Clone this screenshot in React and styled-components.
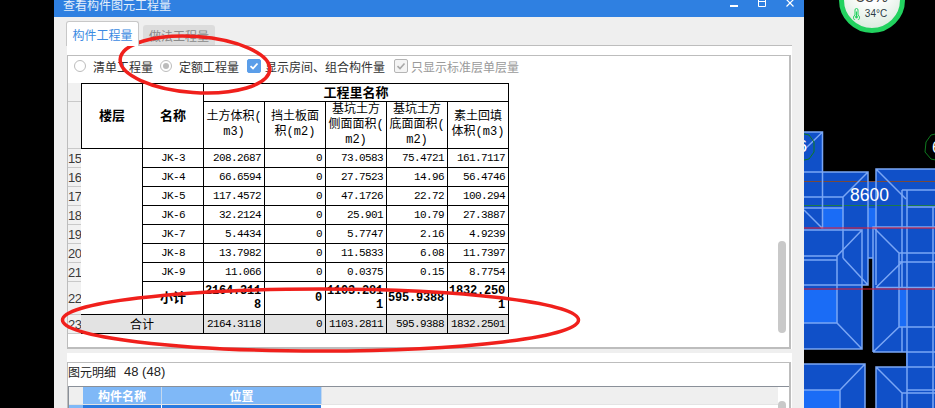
import React from 'react';
import styled, { createGlobalStyle } from 'styled-components';

const SANS = `'Noto Sans CJK SC', 'Liberation Sans', sans-serif`;
const MONO = `'Liberation Mono', 'Noto Sans CJK SC', monospace`;

const GlobalStyle = createGlobalStyle`
	html, body {
		margin: 0;
		padding: 0;
		background: #000;
		font-family: ${SANS};
	}
`;

const Screen = styled.div`
	position: relative;
	width: 935px;
	height: 408px;
	padding-left: 54px;
	box-sizing: border-box;
	display: flex;
	overflow: hidden;
	background: #000;
`;

const Dialog = styled.div`
	width: 750px;
	height: 408px;
	flex: none;
	display: flex;
	flex-direction: column;
	background: #efefef;
`;

const TitleBar = styled.div`
	height: 17px;
	flex: none;
	display: flex;
	justify-content: space-between;
	padding: 0 10px 0 9px;
	background: #2f80e1;
	color: #fff;
	overflow: hidden;
`;

const Title = styled.div`
	font-size: 12px;
	line-height: 9px;
	height: 9px;
	color: #e4effb;
`;

const WindowButtons = styled.div`
	display: flex;
	gap: 20px;
	align-items: flex-start;
`;

const DialogBody = styled.div`
	flex: 1;
	display: flex;
	flex-direction: column;
	padding: 4px 12px 0 13px;
	min-height: 0;
`;

const TabStrip = styled.div`
	height: 24px;
	flex: none;
	display: flex;
	align-items: flex-end;
	gap: 4px;
	margin-left: -1px;
`;

const Tab = styled.div`
	box-sizing: border-box;
	height: ${(p) => (p.$active ? '25px' : '20px')};
	width: ${(p) => (p.$active ? '73px' : '72px')};
	margin-bottom: ${(p) => (p.$active ? '-1px' : '0')};
	position: relative;
	z-index: ${(p) => (p.$active ? 1 : 0)};
	display: flex;
	align-items: center;
	justify-content: center;
	font-size: 12px;
	border-radius: 3px 3px 0 0;
	background: ${(p) => (p.$active ? '#fff' : '#dcdcdc')};
	color: ${(p) => (p.$active ? '#3b8ae2' : '#8a8a8a')};
	border: ${(p) => (p.$active ? '1px solid #c8c8c8' : 'none')};
	border-bottom: none;
`;

const Panel = styled.div`
	flex: 1;
	display: flex;
	flex-direction: column;
	min-height: 0;
	background: #fff;
	border-top: 1px solid #bdbdbd;
	padding-top: 9px;
`;

const QuantityBox = styled.div`
	box-sizing: border-box;
	height: 294px;
	flex: none;
	display: flex;
	flex-direction: column;
	border: 1px solid #bdbdbd;
	border-right-width: 2px;
	border-bottom-width: 2px;
	margin-right: 1px;
`;

const ToolRow = styled.div`
	height: 27px;
	flex: none;
	display: flex;
	align-items: center;
	gap: 7px;
	padding: 0 0 7px 6px;
	box-sizing: border-box;
	font-size: 12px;
	color: #333;
`;

const Option = styled.label`
	display: flex;
	align-items: center;
	gap: ${(p) => (p.$box ? (p.$muted ? '3px' : '4px') : '7px')};
	margin-left: ${(p) => (p.$box ? (p.$muted ? '2px' : '1px') : '0')};
	color: ${(p) => (p.$muted ? '#9a9a9a' : '#333')};
`;

const Radio = styled.span`
	box-sizing: border-box;
	width: 12px;
	height: 12px;
	border-radius: 50%;
	border: 1px solid #bcbcbc;
	background: #fff;
	display: flex;
	align-items: center;
	justify-content: center;

	&::after {
		content: '';
		width: 6px;
		height: 6px;
		border-radius: 50%;
		background: ${(p) => (p.$on ? '#bcbcbc' : 'transparent')};
	}
`;

const CheckBox = styled.span`
	box-sizing: border-box;
	width: 14px;
	height: 14px;
	border-radius: 2px;
	display: flex;
	align-items: center;
	justify-content: center;
	background: ${(p) => (p.$muted ? '#f4f4f4' : '#5b9ee9')};
	border: 1px solid ${(p) => (p.$muted ? '#b5b5b5' : '#5b9ee9')};
`;

const GridRow = styled.div`
	flex: 1;
	display: flex;
	min-height: 0;
`;

const Gutter = styled.div`
	width: 13px;
	flex: none;
	display: flex;
	flex-direction: column;
`;

const GutterCell = styled.div`
	box-sizing: border-box;
	height: ${(p) => p.$h}px;
	background: #f1f1f1;
	border-bottom: 1px solid #c9c9c9;
	overflow: hidden;
	white-space: nowrap;
	display: flex;
	align-items: center;
	font-family: 'Liberation Sans', sans-serif;
	font-size: 13px;
	letter-spacing: -0.5px;
	color: #3a3a3a;
`;

const QuantityTable = styled.table`
	table-layout: fixed;
	width: 428px;
	height: 251px;
	border-collapse: separate;
	border-spacing: 0;
	flex: none;
	align-self: flex-start;
	background: #fff;
	color: #000;
`;

const Row = styled.tr`
	height: ${(p) => p.$h}px;
`;

const Cell = styled.td`
	box-sizing: border-box;
	padding: 0 3px 0 0;
	border-right: 1px solid #000;
	border-bottom: 1px solid #000;
	font-family: ${MONO};
	font-size: 11px;
	line-height: 14px;
	letter-spacing: -0.6px;
	text-align: right;
	white-space: nowrap;
	overflow: hidden;
	background: ${(p) => (p.$total ? '#e3e3e3' : '#fff')};
`;

const NameCell = styled(Cell)`
	text-align: center;
	padding: 0;
`;

const FloorCell = styled(Cell)`
	padding: 0;
`;

const BoldCell = styled(Cell)`
	font-size: 12px;
	font-weight: 700;
	letter-spacing: -0.2px;
	line-height: 14px;
	white-space: normal;
	word-break: break-all;
`;

const BoldLabel = styled(Cell)`
	font-family: ${SANS};
	font-size: 13px;
	font-weight: 700;
	letter-spacing: 0;
	text-align: center;
	padding: 0 0 2px;
`;

const TotalLabel = styled(Cell)`
	font-family: ${SANS};
	font-size: 12px;
	letter-spacing: 0;
	text-align: center;
	padding: 0;
`;

const HeadCell = styled.th`
	box-sizing: border-box;
	padding: 0 0 3px;
	border-right: 1px solid #000;
	border-bottom: 1px solid #000;
	border-top: ${(p) => (p.$top ? '1px solid #000' : 'none')};
	border-left: ${(p) => (p.$left ? '1px solid #000' : 'none')};
	font-family: ${SANS};
	font-size: 13px;
	line-height: 13px;
	font-weight: 700;
`;

const ColumnHead = styled(HeadCell)`
	padding: 0;
	font-family: ${MONO};
	font-size: 12px;
	font-weight: 400;
	line-height: 15px;
	white-space: pre-line;
	overflow: hidden;
`;

const ScrollTrack = styled.div`
	flex: none;
	margin-left: auto;
	width: 8px;
	margin-right: 3px;
	padding-top: ${(p) => p.$top}px;
`;

const ScrollThumb = styled.div`
	width: 8px;
	height: ${(p) => p.$h}px;
	border-radius: 4px;
	background: #c9c9c9;
`;

const Splitter = styled.div`
	height: 4px;
	flex: none;
	background: #efefef;
`;

const DetailBox = styled.div`
	margin-top: 9px;
	flex: 1;
	min-height: 0;
	display: flex;
	flex-direction: column;
	margin-right: 1px;
	border-top: 1px solid #bdbdbd;
	border-left: 1px solid #bdbdbd;
	border-right: 2px solid #bdbdbd;
`;

const DetailLabel = styled.div`
	height: 23px;
	flex: none;
	display: flex;
	gap: 8px;
	align-items: flex-start;
	font-size: 12px;
	line-height: 18px;
	color: #222;
`;

const DetailCount = styled.span`
	font-family: 'Liberation Sans', sans-serif;
	font-size: 13px;
`;

const MiniGrid = styled.div`
	flex: 1;
	min-height: 0;
	display: flex;
	border-top: 1px solid #8a9099;
	border-left: 1px solid #8a9099;
`;

const MiniColumns = styled.div`
	flex: 1;
	display: flex;
	flex-direction: column;
`;

const MiniHeader = styled.div`
	height: 17px;
	flex: none;
	display: flex;
	background: #efefef;
	border-bottom: 1px solid #e4e4e4;
`;

const MiniCorner = styled.div`
	width: 14px;
	flex: none;
	background: ${(p) => (p.$on ? '#7fb8f7' : '#efefef')};
`;

const MiniHeadCell = styled.div`
	width: ${(p) => p.$w}px;
	box-sizing: border-box;
	display: flex;
	align-items: center;
	justify-content: center;
	background: #7fb8f7;
	border-right: 1px solid #c4d8ee;
	color: #fff;
	font-size: 12px;
	font-weight: 700;
`;

const MiniRow = styled.div`
	flex: 1;
	display: flex;
`;

const MiniCell = styled.div`
	width: ${(p) => p.$w}px;
	box-sizing: border-box;
	background: #2a7ae0;
	border-right: 1px solid #fff;
`;

const Canvas = styled.div`
	position: relative;
	flex: 1;
	height: 408px;
	overflow: hidden;
	background: #000;
`;

const Drawing = styled.svg`
	display: block;
`;

const Gauge = styled.div`
	position: absolute;
	left: 35px;
	top: -33px;
	box-sizing: border-box;
	width: 66px;
	height: 66px;
	border-radius: 50%;
	border: 5px solid #22d25f;
	background: radial-gradient(circle at 50% 30%, #ffffff 30%, #cfe5d4 100%);
	display: flex;
	flex-direction: column;
	align-items: center;
	justify-content: flex-end;
	padding-bottom: 8px;
	font-family: 'Liberation Sans', sans-serif;
`;

const GaugeLoad = styled.div`
	font-size: 16px;
	line-height: 12px;
	margin-bottom: 5px;
	color: #444;
`;

const GaugeTemp = styled.div`
	display: flex;
	align-items: center;
	gap: 5px;
	padding-right: 4px;
	font-size: 10px;
	line-height: 12px;
	color: #2b3a44;
`;

const Annotations = styled.svg`
	position: absolute;
	left: 0;
	top: 0;
	pointer-events: none;
`;

const COLUMN_HEADS = [
	'土方体积(\nm3)',
	'挡土板面\n积(m2)',
	'基坑土方\n侧面面积(\nm2)',
	'基坑土方\n底面面积(\nm2)',
	'素土回填\n体积(m3)',
];

const ROWS = [
	['JK-3', '208.2687', '0', '73.0583', '75.4721', '161.7117'],
	['JK-4', '66.6594', '0', '27.7523', '14.96', '56.4746'],
	['JK-5', '117.4572', '0', '47.1726', '22.72', '100.294'],
	['JK-6', '32.2124', '0', '25.901', '10.79', '27.3887'],
	['JK-7', '5.4434', '0', '5.7747', '2.16', '4.9239'],
	['JK-8', '13.7982', '0', '11.5833', '6.08', '11.7397'],
	['JK-9', '11.066', '0', '0.0375', '0.15', '8.7754'],
];

const SUBTOTAL = ['2164.3118', '0', '1103.2811', '595.9388', '1832.2501'];
const TOTAL = ['2164.3118', '0', '1103.2811', '595.9388', '1832.2501'];

const GUTTER = [
	['', 19],
	['', 47],
	['15', 19],
	['16', 19],
	['17', 19],
	['18', 19],
	['19', 19],
	['20', 19],
	['21', 19],
	['22', 33],
	['23', 19],
];

const BLUE = '#1050c8';
const BRIGHT = '#1a6cf6';
const EDGE = '#7aa6f5';

const CanvasDrawing = () => (
	<Drawing width="131" height="408" viewBox="804 0 131 408">
		<g fill={BLUE}>
			<rect x="804" y="132" width="19" height="97" />
			<rect x="804" y="172" width="64" height="113" />
			<rect x="804" y="230" width="58" height="119" />
			<rect x="868" y="181" width="8" height="77" />
			<rect x="876" y="169" width="59" height="119" />
			<rect x="873" y="227" width="62" height="125" />
			<rect x="906" y="190" width="29" height="218" />
			<rect x="804" y="364" width="61" height="44" />
			<rect x="876" y="367" width="59" height="41" />
		</g>
		<g fill={BRIGHT}>
			<rect x="823" y="208" width="20" height="21" />
			<rect x="868" y="208" width="8" height="20" />
			<rect x="804" y="290" width="33" height="33" />
			<rect x="899" y="290" width="7" height="37" />
			<rect x="804" y="390" width="36" height="18" />
		</g>
		<line x1="804" y1="181.5" x2="935" y2="181.5" stroke="#7a4a3a" strokeWidth="1" />
		<line x1="804" y1="205.5" x2="935" y2="205.5" stroke="#1d7a4a" strokeWidth="1" />
		<g fill="none" stroke={EDGE} strokeWidth="1.5">
			<path d="M804 132H822.5V228.5M804 150L822.5 132M804 210L822.5 228.5" />
			<path d="M804 172H868V285H804M868 172L843 197M843 197H804M843 197V258M843 258L868 285M804 208H843" />
			<path d="M804 230H862V349H804M862 230L837 256V323M862 349L837 323H804M804 256H837M804 260H837" />
			<path d="M876 285V169H935M876 169L906 199M876 287.5H935M876 287.5L902 262M868 258H873" />
			<path d="M873 352V227H935M873 227L899 253V327M873 352L899 327H935M873 352H935M899 253H935M899 262H935" />
			<path d="M902 190V288M907 190V408M902 190H935M933 207V408M907 207H935M902 327V352" />
			<path d="M907 367H935M907 390H935" />
			<path d="M804 364H865V408M865 364L840 390V408M840 390H804" />
			<path d="M876 408V367H907M876 367L902 393V408M902 393H935" />
		</g>
		<line x1="804" y1="228" x2="935" y2="228" stroke="#f01a2a" strokeWidth="1" />
		<line x1="804" y1="289" x2="935" y2="289" stroke="#e01a2a" strokeWidth="1" />
		<polygon points="800,133 809,135 814,142 814,152 809,159 800,161" fill="none" stroke="#0f7a1f" strokeWidth="1" />
		<polygon points="940,133 931,135 926,142 925,152 931,159 940,161" fill="none" stroke="#0f7a1f" strokeWidth="1" />
		<g fontFamily="'Liberation Sans', sans-serif" fill="#fff">
			<text x="798" y="152" fontSize="16">6</text>
			<text x="932" y="153" fontSize="16">6</text>
			<text x="850" y="201" fontSize="17.5">8600</text>
		</g>
	</Drawing>
);

const ThermometerIcon = () => (
	<svg width="7" height="12" viewBox="0 0 7 12">
		<path d="M2 7V2a1.5 1.5 0 0 1 3 0V7a3 3 0 1 1-3 0Z" fill="none" stroke="#22d25f" strokeWidth="1" />
		<circle cx="3.5" cy="9" r="1.4" fill="#22d25f" />
		<line x1="3.5" y1="3.5" x2="3.5" y2="8" stroke="#22d25f" strokeWidth="1" />
	</svg>
);

const App = () => (
	<>
		<GlobalStyle />
		<Screen>
			<Dialog>
				<TitleBar>
					<Title>查看构件图元工程量</Title>
					<WindowButtons>
						<svg width="8" height="7" viewBox="0 0 8 7">
							<rect x="0" y="5" width="8" height="2" fill="#fff" />
						</svg>
						<svg width="8" height="7" viewBox="0 0 8 7">
							<path d="M0.5 0V6.5H7.5V0M0 1.5H8" fill="none" stroke="#fff" strokeWidth="1" />
						</svg>
						<svg width="8" height="7" viewBox="0 0 8 7">
							<path d="M0.5 -0.5L7.5 6.5M7.5 -0.5L0.5 6.5" fill="none" stroke="#fff" strokeWidth="1.2" />
						</svg>
					</WindowButtons>
				</TitleBar>
				<DialogBody>
					<TabStrip>
						<Tab $active>构件工程量</Tab>
						<Tab>做法工程量</Tab>
					</TabStrip>
					<Panel>
						<QuantityBox>
							<ToolRow>
								<Option>
									<Radio />
									清单工程量
								</Option>
								<Option>
									<Radio $on />
									定额工程量
								</Option>
								<Option $box>
									<CheckBox>
										<svg width="10" height="10" viewBox="0 0 10 10">
											<path d="M1.5 5.2L4 7.5L8.5 2.5" fill="none" stroke="#fff" strokeWidth="1.8" />
										</svg>
									</CheckBox>
									显示房间、组合构件量
								</Option>
								<Option $box $muted>
									<CheckBox $muted>
										<svg width="10" height="10" viewBox="0 0 10 10">
											<path d="M1.5 5.2L4 7.5L8.5 2.5" fill="none" stroke="#a8a8a8" strokeWidth="1.6" />
										</svg>
									</CheckBox>
									只显示标准层单层量
								</Option>
							</ToolRow>
							<GridRow>
								<Gutter>
									{GUTTER.map(([label, h], i) => (
										<GutterCell key={i} $h={h}>
											{label}
										</GutterCell>
									))}
								</Gutter>
								<QuantityTable>
									<colgroup>
										<col width="62" />
										<col width="61" />
										<col width="61" />
										<col width="61" />
										<col width="61" />
										<col width="61" />
										<col width="61" />
									</colgroup>
									<thead>
										<Row $h={19}>
											<HeadCell rowSpan={2} $top $left>
												楼层
											</HeadCell>
											<HeadCell rowSpan={2} $top>
												名称
											</HeadCell>
											<HeadCell colSpan={5} $top>
												工程里名称
											</HeadCell>
										</Row>
										<Row $h={47}>
											{COLUMN_HEADS.map((text) => (
												<ColumnHead key={text}>{text}</ColumnHead>
											))}
										</Row>
									</thead>
									<tbody>
										{ROWS.map(([name, ...values], i) => (
											<Row key={name} $h={19}>
												{i === 0 && <FloorCell rowSpan={8} />}
												<NameCell>{name}</NameCell>
												{values.map((v, j) => (
													<Cell key={j}>{v}</Cell>
												))}
											</Row>
										))}
										<Row $h={33}>
											<BoldLabel>小计</BoldLabel>
											{SUBTOTAL.map((v, j) => (
												<BoldCell key={j}>{v}</BoldCell>
											))}
										</Row>
										<Row $h={19}>
											<TotalLabel colSpan={2} $total>
												合计
											</TotalLabel>
											{TOTAL.map((v, j) => (
												<Cell key={j} $total>
													{v}
												</Cell>
											))}
										</Row>
									</tbody>
								</QuantityTable>
								<ScrollTrack $top={158}>
									<ScrollThumb $h={92} />
								</ScrollTrack>
							</GridRow>
						</QuantityBox>
						<Splitter />
						<DetailBox>
							<DetailLabel>
								图元明细
								<DetailCount>48 (48)</DetailCount>
							</DetailLabel>
							<MiniGrid>
								<MiniColumns>
									<MiniHeader>
										<MiniCorner />
										<MiniHeadCell $w={79}>构件名称</MiniHeadCell>
										<MiniHeadCell $w={160}>位置</MiniHeadCell>
									</MiniHeader>
									<MiniRow>
										<MiniCorner $on />
										<MiniCell $w={79} />
										<MiniCell $w={160} />
									</MiniRow>
								</MiniColumns>
								<ScrollTrack $top={14}>
									<ScrollThumb $h={60} />
								</ScrollTrack>
							</MiniGrid>
						</DetailBox>
					</Panel>
				</DialogBody>
			</Dialog>
			<Canvas>
				<CanvasDrawing />
				<Gauge>
					<GaugeLoad>58%</GaugeLoad>
					<GaugeTemp>
						<ThermometerIcon />
						34°C
					</GaugeTemp>
				</Gauge>
			</Canvas>
			<Annotations width="935" height="408" viewBox="0 0 935 408">
				<ellipse cx="195" cy="64.5" rx="75" ry="28" transform="rotate(4 195 64.5)" fill="none" stroke="#f0201c" strokeWidth="3.5" />
				<ellipse cx="320.5" cy="320" rx="258" ry="31" fill="none" stroke="#f0201c" strokeWidth="3.5" />
			</Annotations>
		</Screen>
	</>
);

export default App;
